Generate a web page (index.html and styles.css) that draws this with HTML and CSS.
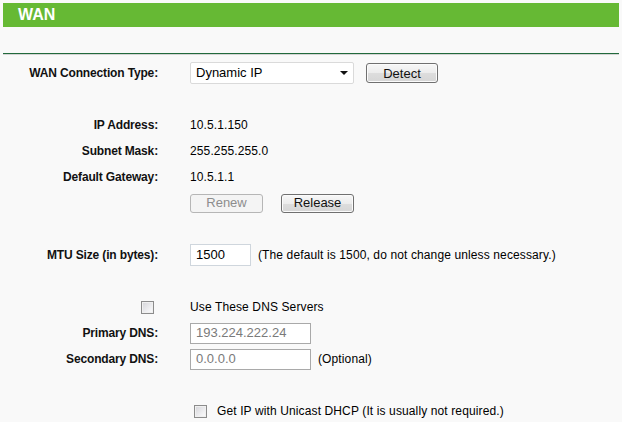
FILE: index.html
```html
<!DOCTYPE html>
<html>
<head>
<meta charset="utf-8">
<link rel="stylesheet" href="styles.css">
</head>
<body>
<div class="page">
  <div class="title-bar">WAN</div>
  <div class="divider"></div>
  <div class="form">
    <div class="row">
      <div class="label">WAN Connection Type:</div>
      <div class="value">
        <div class="select-wrap">
          <select class="select"><option>Dynamic IP</option></select>
          <span class="arrow"></span>
        </div>
        <button class="btn btn-detect">Detect</button>
      </div>
    </div>

    <div class="row gap">
      <div class="label">IP Address:</div>
      <div class="value">10.5.1.150</div>
    </div>
    <div class="row">
      <div class="label">Subnet Mask:</div>
      <div class="value">255.255.255.0</div>
    </div>
    <div class="row">
      <div class="label">Default Gateway:</div>
      <div class="value">10.5.1.1</div>
    </div>
    <div class="row">
      <div class="label"></div>
      <div class="value buttons">
        <button class="btn btn-small" disabled>Renew</button>
        <button class="btn btn-small">Release</button>
      </div>
    </div>

    <div class="row gap">
      <div class="label">MTU Size (in bytes):</div>
      <div class="value">
        <input class="input input-mtu" type="text" value="1500">
        <span class="note">(The default is 1500, do not change unless necessary.)</span>
      </div>
    </div>

    <div class="row gap">
      <div class="label label-check"><span class="checkbox"></span></div>
      <div class="value">Use These DNS Servers</div>
    </div>
    <div class="row">
      <div class="label">Primary DNS:</div>
      <div class="value">
        <input class="input input-dns" type="text" value="193.224.222.24" disabled>
      </div>
    </div>
    <div class="row">
      <div class="label">Secondary DNS:</div>
      <div class="value">
        <input class="input input-dns" type="text" value="0.0.0.0" disabled>
        <span class="note">(Optional)</span>
      </div>
    </div>

    <div class="row gap">
      <div class="label"></div>
      <div class="value unicast">
        <span class="checkbox"></span>
        <span class="note-unicast">Get IP with Unicast DHCP (It is usually not required.)</span>
      </div>
    </div>
  </div>
</div>
</body>
</html>
```

FILE: styles.css
```css
html, body {
  margin: 0;
  padding: 0;
  background: #f9f9f9;
}

body {
  font-family: "Liberation Sans", Arial, sans-serif;
  font-size: 12px;
  color: #000;
}

.page {
  padding: 3px 3px 0 3px;
}

.title-bar {
  height: 24px;
  background: #66b934;
  color: #fff;
  font-weight: bold;
  font-size: 16px;
  line-height: 24px;
  padding-left: 15px;
}

.divider {
  margin-top: 26px;
  height: 1px;
  background: #226a3c;
  box-shadow: 0 1px 0 #d4d4d4;
}

.form {
  padding-top: 6px;
}

.row {
  display: flex;
  align-items: center;
  height: 26px;
}

.row.gap {
  margin-top: 26px;
}

.label {
  width: 155px;
  flex: none;
  text-align: right;
  font-weight: bold;
  letter-spacing: -0.15px;
  color: #111;
}

.label-check {
  display: flex;
  justify-content: flex-end;
  padding-right: 4px;
  box-sizing: border-box;
}

.value {
  margin-left: 32px;
  display: flex;
  align-items: center;
  white-space: nowrap;
  letter-spacing: 0.12px;
}

.select-wrap {
  position: relative;
  width: 164px;
  height: 22px;
}

.select {
  appearance: none;
  -webkit-appearance: none;
  width: 164px;
  height: 22px;
  margin: 0;
  box-sizing: border-box;
  border: 1px solid #dadada;
  border-radius: 2px;
  background: #fff;
  font-family: "Liberation Sans", Arial, sans-serif;
  font-size: 13px;
  color: #000;
  padding: 0 0 2px 5px;
  outline: none;
}

.arrow {
  position: absolute;
  right: 6px;
  top: 9px;
  width: 0;
  height: 0;
  border-left: 4px solid transparent;
  border-right: 4px solid transparent;
  border-top: 4px solid #111;
}

.btn {
  font-family: "Liberation Sans", Arial, sans-serif;
  font-size: 13px;
  color: #111;
  letter-spacing: 0;
  border: 1px solid #707070;
  border-radius: 3px;
  background: linear-gradient(#f7f7f7 0%, #ececec 50%, #dddddd 51%, #d6d6d6 100%);
  box-shadow: inset 0 0 0 1px #fbfbfb;
  padding: 0;
  margin: 0;
  box-sizing: border-box;
}

.btn-detect {
  margin-left: 12px;
  width: 72px;
  height: 20px;
}

.buttons {
  gap: 18px;
}

.btn-small {
  width: 73px;
  height: 19px;
  line-height: 16px;
}

.btn:disabled {
  color: #8d8d8d;
  border-color: #b6b6b6;
  background: #f4f4f4;
  box-shadow: none;
}

.input {
  box-sizing: border-box;
  height: 22px;
  margin: 0;
  border: 1px solid #cfd6dd;
  background: #fff;
  font-family: "Liberation Sans", Arial, sans-serif;
  font-size: 13px;
  color: #000;
  padding: 0 0 1px 5px;
  outline: none;
}

.input-mtu {
  width: 61px;
}

.input-dns {
  width: 121px;
  height: 21px;
  border-color: #a9a9a9;
  color: #7a7a7a;
  background: #fff;
}

.note {
  margin-left: 7px;
}

.checkbox {
  display: inline-block;
  width: 13px;
  height: 13px;
  box-sizing: border-box;
  border: 1px solid #8c8c8c;
  background: linear-gradient(135deg, #d4d4d8 0%, #f2f2f4 70%, #fbfbfb 100%);
  box-shadow: inset 0 0 0 1px #f0f0f0;
}

.unicast {
  padding-left: 4px;
}

.note-unicast {
  margin-left: 10px;
}
```
